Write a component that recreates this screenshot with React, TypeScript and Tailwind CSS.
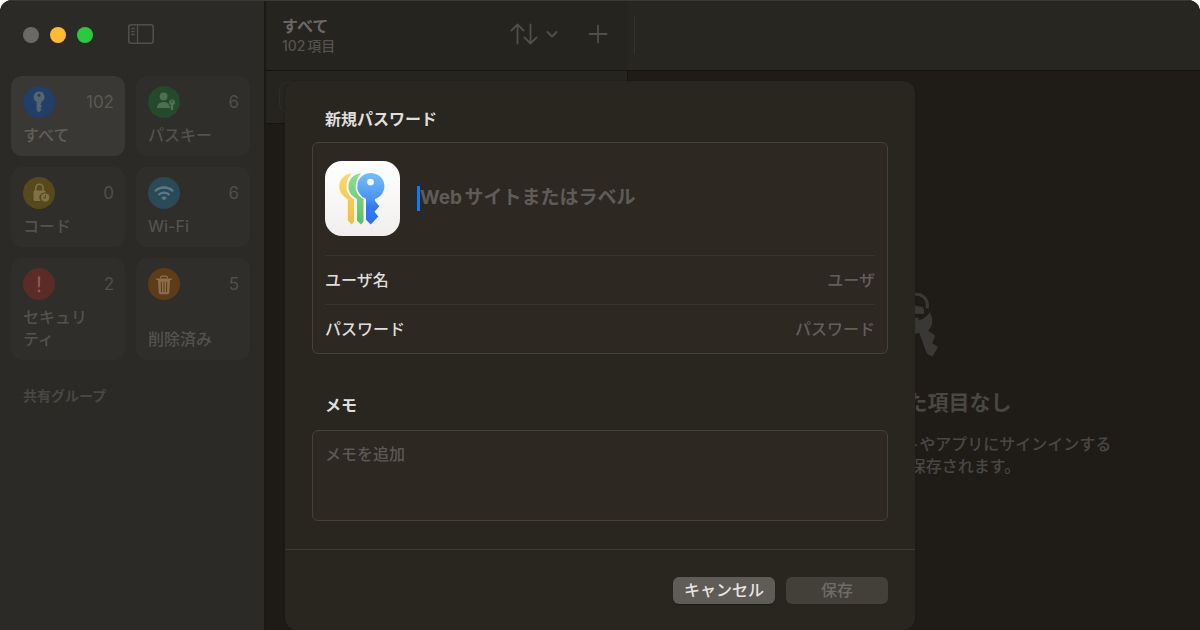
import type { ReactNode } from "react";

const FONT = "font-['Inter','Noto_Sans_CJK_JP',sans-serif]";

function KeyGlyph() {
  return (
    <svg viewBox="0 0 32 32" className="size-8" fill="#54656f" aria-hidden="true">
      <path
        fillRule="evenodd"
        d="M16 5.6a5.4 5.4 0 0 0-2.4 10.2v8.6l2.2 2.2 3-3-1.6-1.7 1.9-1.9-1.8-1.8 1.3-1.4v-1A5.4 5.4 0 0 0 16 5.6Zm0 2.2a1.5 1.5 0 1 1 0 3 1.5 1.5 0 0 1 0-3Z"
      />
    </svg>
  );
}

function PasskeyGlyph() {
  return (
    <svg viewBox="0 0 32 32" className="size-8" fill="#4f6f52" aria-hidden="true">
      <circle cx="15.6" cy="10.4" r="3.9" />
      <path d="M9 21.8c0-3.600 3-5.800 6.600-5.800 2 0 3.700.6 4.900 1.700.1 1.100.6 2 1.400 2.600v1.700H9.600c-.4 0-.6-.1-.6-.2Z" />
      <path
        fillRule="evenodd"
        d="M24 13.400a2.900 2.900 0 0 0-1.300 5.500v4.400l1.300 1.300 1.700-1.700-.9-1 1-1-.9-1 .6-1A2.900 2.900 0 0 0 24 13.400Zm0 1.400a.8.8 0 1 1 0 1.600.8.8 0 0 1 0-1.600Z"
      />
    </svg>
  );
}

function CodeGlyph() {
  return (
    <svg viewBox="0 0 32 32" className="size-8" aria-hidden="true">
      <path d="M12.700 14v-3a3.700 3.700 0 0 1 7.400 0v3" fill="none" stroke="#7e7348" strokeWidth="1.600" />
      <path
        d="M12 13.400h9c1 0 1.500.5 1.500 1.500v.7a5 5 0 0 0-4.800 8.300H12c-1 0-1.500-.5-1.500-1.500v-7.500c0-1 .5-1.500 1.500-1.500Z"
        fill="#7e7348"
      />
      <circle cx="22.200" cy="20.600" r="4.100" fill="#7e7348" />
      <path d="M22.400 18v2.800h-2.200" fill="none" stroke="#56491b" strokeWidth="1.100" />
    </svg>
  );
}

function WifiGlyph() {
  return (
    <svg viewBox="0 0 32 32" className="size-8" fill="none" stroke="#5a7986" strokeWidth="2.300" aria-hidden="true">
      <path d="M6.900 14.200a13 13 0 0 1 18.200 0" />
      <path d="M10.400 17.900a8 8 0 0 1 11.200 0" />
      <path d="M16 23.600l-2.800-2.800a4 4 0 0 1 5.600 0Z" fill="#5a7986" stroke="none" />
    </svg>
  );
}

function AlertGlyph() {
  return (
    <svg viewBox="0 0 32 32" className="size-8" fill="#8b5954" aria-hidden="true">
      <path d="M14.700 9.300c0-.7.500-1.100 1.300-1.100s1.300.4 1.300 1.100l-.4 9.300c0 .6-.4.9-.9.9s-.9-.3-.9-.9Z" />
      <circle cx="16" cy="22.900" r="1.400" />
    </svg>
  );
}

function TrashGlyph() {
  return (
    <svg viewBox="0 0 32 32" className="size-8" aria-hidden="true">
      <path d="M12.700 10.600V9.200c0-.7.400-1.100 1.100-1.100h4.400c.7 0 1.100.4 1.100 1.100v1.400" fill="none" stroke="#8d6e4c" strokeWidth="1.300" />
      <path d="M8.700 11.200h14.600" stroke="#8d6e4c" strokeWidth="1.500" strokeLinecap="round" />
      <path d="M10 12h12l-.8 12.500c-.1 1.100-.7 1.700-1.800 1.700h-6.800c-1.100 0-1.700-.6-1.800-1.700Z" fill="#8d6e4c" />
      <path d="M13.200 14l.3 9.800M16 14v9.800M18.800 14l-.3 9.800" stroke="#5e3c18" strokeWidth="1" strokeLinecap="round" />
    </svg>
  );
}

function PasswordsAppIcon() {
  return (
    <svg viewBox="0 0 75 75" className="size-[75px] shrink-0" role="img" aria-label="パスワード">
      <defs>
        <linearGradient id="tile" x1="0" y1="0" x2="0" y2="1">
          <stop offset="0" stopColor="#ffffff" />
          <stop offset="1" stopColor="#f1efed" />
        </linearGradient>
        <linearGradient id="blueKey" x1="0" y1="0" x2="0" y2="1">
          <stop offset="0" stopColor="#74c0f7" />
          <stop offset="0.500" stopColor="#4b94f6" />
          <stop offset="0.650" stopColor="#3478f6" />
          <stop offset="1" stopColor="#2f6ff5" />
        </linearGradient>
        <linearGradient id="greenKey" x1="0" y1="0" x2="0" y2="1">
          <stop offset="0" stopColor="#8be08d" />
          <stop offset="1" stopColor="#5bc163" />
        </linearGradient>
        <linearGradient id="yellowKey" x1="0" y1="0" x2="0" y2="1">
          <stop offset="0" stopColor="#f9da6c" />
          <stop offset="1" stopColor="#f3bd3d" />
        </linearGradient>
      </defs>
      <rect width="75" height="75" rx="17" fill="url(#tile)" />
      <path
        d="M26.800 12.200C19.700 12.700 14.300 18.400 14.300 25.500c0 5.300 3.300 9.800 8.500 12.400v21.700l3.900 3.800 2.300-2.700V38.300c-4.800-2.800-7.700-7.400-7.700-12.800 0-5 2-9.600 5.500-13.300Z"
        fill="url(#yellowKey)"
      />
      <path
        d="M36 12.200C28.900 12.700 23.500 18.400 23.500 25.500c0 5.300 3.300 9.800 8.500 12.400v21.700l3.900 3.800 2.600-2.700V38.300c-4.800-2.800-7.900-7.400-7.900-12.800 0-5 1.900-9.600 5.400-13.300Z"
        fill="url(#greenKey)"
      />
      <path
        fillRule="evenodd"
        d="M45.700 12A13.300 13.300 0 0 0 41 37.800v20.900l4.700 4.800 7.600-7.900-3.800-4.800 4.800-5.600-4.300-5.200v-2A13.300 13.300 0 0 0 45.700 12Zm-.2 5.700a3.400 3.400 0 1 1 0 6.800 3.400 3.400 0 0 1 0-6.800Z"
        fill="url(#blueKey)"
      />
    </svg>
  );
}

function KeyringDrawing() {
  return (
    <svg viewBox="3 0 48 66" className="h-[66px] w-12" fill="#393834" aria-hidden="true">
      <path d="M17 44 10 64 4 66 3 56 6 52 3 45 10 38Z" />
      <path d="M29 41.500 37 63l5.500 2.500L48 56l-5.800-3.800 3-7.500-7-5A14.500 14.500 0 0 0 28 15.200a14.500 14.500 0 1 0 1 26.300Z" />
      <circle cx="26.500" cy="13" r="10.800" fill="none" stroke="#1f1c17" strokeWidth="6" />
      <path d="M22 18q6-4 12 0v5H22Z" />
      <path d="M39.500 18.500q-2.500 6.500-11 9.500" fill="none" stroke="#1f1c17" strokeWidth="3" />
      <path d="M15.900 11A10.800 10.800 0 0 1 37 17.500" fill="none" stroke="#393834" strokeWidth="3" />
    </svg>
  );
}

type Category = {
  label: ReactNode;
  count: number;
  disc: string;
  glyph: ReactNode;
  selected?: boolean;
};

const categories: Category[] = [
  { label: "すべて", count: 102, disc: "bg-[#233e68]", glyph: <KeyGlyph />, selected: true },
  { label: "パスキー", count: 6, disc: "bg-[#24492b]", glyph: <PasskeyGlyph /> },
  { label: "コード", count: 0, disc: "bg-[#56491b]", glyph: <CodeGlyph /> },
  { label: "Wi-Fi", count: 6, disc: "bg-[#2b4a57]", glyph: <WifiGlyph /> },
  { label: <>セキュリ<br />ティ</>, count: 2, disc: "bg-[#5c2b28]", glyph: <AlertGlyph /> },
  { label: "削除済み", count: 5, disc: "bg-[#5e3c18]", glyph: <TrashGlyph /> },
];

function CategoryCard({ label, count, disc, glyph, selected }: Category) {
  return (
    <button
      type="button"
      className={`flex flex-col justify-between gap-1.5 rounded-[11px] py-2.5 pr-[11px] pl-3 text-left ${
        selected ? "bg-[#3a3834]" : "bg-[#2f2e2a]"
      }`}
    >
      <span className="flex w-full items-center justify-between">
        <span className={`size-8 rounded-full ${disc}`}>{glyph}</span>
        <span className={`text-[17px] leading-6 ${selected ? "text-[#5a5955]" : "text-[#504f4b]"}`}>{count}</span>
      </span>
      <span className={`text-base leading-[22px] font-medium ${selected ? "text-[#5f5e5a]" : "text-[#53524e]"}`}>
        {label}
      </span>
    </button>
  );
}

function Sidebar() {
  return (
    <aside className="flex w-[266px] shrink-0 flex-col border-r-2 border-[#1a1915] bg-[#2b2a26] px-[11px]">
      <div className="flex h-[76px] items-start pt-[23px] pl-3">
        <div className="flex h-6 items-center gap-[11px]">
          <span className="size-4 rounded-full bg-[#6b6965]" />
          <span className="size-4 rounded-full bg-[#febb2e]" />
          <span className="size-4 rounded-full bg-[#29c940]" />
        </div>
        <button type="button" aria-label="サイドバー" className="ml-[34px]">
          <svg viewBox="0 0 28 24" className="h-6 w-7" fill="none" stroke="#504f4b" strokeWidth="1.600">
            <rect x="1.800" y="1.800" width="24.400" height="18.400" rx="2.500" />
            <path d="M10.500 2v18M4.200 5.500h3.600M4.200 8.500h3.600M4.200 11.500h3.600" strokeWidth="1.300" />
          </svg>
        </button>
      </div>
      <nav className="grid w-[239px] grid-cols-2 gap-[11px]">
        {categories.map((category, index) => (
          <CategoryCard key={index} {...category} />
        ))}
      </nav>
      <h2 className="mt-6 pl-3 text-sm leading-6 font-bold text-[#484743]">共有グループ</h2>
    </aside>
  );
}

function ItemList() {
  return (
    <section className="flex w-[362px] shrink-0 flex-col">
      <header className="flex h-[71px] items-center justify-between border-b border-[#161410] bg-[#26241f] pr-5 pl-4">
        <div className="pt-px">
          <h1 className="text-base leading-5 font-bold text-[#6a6864]">すべて</h1>
          <p className="text-sm leading-5 font-medium text-[#54524e] [text-autospace:normal]">102項目</p>
        </div>
        <div className="flex items-center gap-[30px] pb-0.5 text-[#504e4a]">
          <button type="button" aria-label="並べ替え" className="flex items-center gap-2">
            <svg viewBox="0 0 28 24" className="h-6 w-7" fill="none" stroke="currentColor" strokeWidth="1.800" strokeLinecap="round" strokeLinejoin="round">
              <path d="M7.500 21.500V2.500M1.500 8.500l6-6 6 6M20.500 2.500v19M14.500 15.500l6 6 6-6" />
            </svg>
            <svg viewBox="0 0 12 12" className="size-3" fill="none" stroke="currentColor" strokeWidth="2" strokeLinecap="round" strokeLinejoin="round">
              <path d="M1.500 4 6 8.500 10.500 4" />
            </svg>
          </button>
          <button type="button" aria-label="追加">
            <svg viewBox="0 0 20 20" className="size-5" stroke="currentColor" strokeWidth="1.800" strokeLinecap="round">
              <path d="M10 1.500v17M1.500 10h17" />
            </svg>
          </button>
        </div>
      </header>
      <div className="flex h-[53px] items-start border-r border-b border-[#161410] bg-[#26241f] px-[13px] pt-[11px]">
        <input
          type="search"
          aria-label="検索"
          className="h-[30px] w-full rounded-lg border border-[#2d2c28] bg-[#272520] outline-none"
        />
      </div>
      <div className="grow bg-[#1e1b16]" />
    </section>
  );
}

function Detail() {
  return (
    <section className="flex min-w-0 grow flex-col">
      <header className="flex h-[71px] items-center border-b border-[#161410] bg-[#272621] px-1.5">
        <span className="h-[38px] w-px bg-[#34332f]" />
      </header>
      <div className="flex grow flex-col items-center bg-[#1f1c17] pt-[220px] pl-1.5 text-center text-[#494743]">
        <KeyringDrawing />
        <h2 className="mt-8 text-[21px] leading-7 font-bold whitespace-nowrap">選択された項目なし</h2>
        <p className="mt-4 text-base leading-[22px] font-medium whitespace-nowrap [text-autospace:normal]">
          パスワードは、Webサイトやアプリにサインインする
          <br />
          ときに自動で保存されます。
        </p>
      </div>
    </section>
  );
}

function FieldRow({ id, label, placeholder, type }: { id: string; label: string; placeholder: string; type: string }) {
  return (
    <div className="flex h-[49px] items-center justify-between border-t border-[#38352f] text-base leading-6">
      <label htmlFor={id} className="shrink-0 font-medium text-[#dfdedc]">
        {label}
      </label>
      <input
        id={id}
        type={type}
        placeholder={placeholder}
        className="min-w-0 grow bg-transparent text-right font-medium text-[#dfdedc] outline-none placeholder:text-[#625f5a]"
      />
    </div>
  );
}

function NewPasswordDialog() {
  return (
    <form
      role="dialog"
      aria-label="新規パスワード"
      className="absolute top-[81px] left-1/2 w-[630px] -translate-x-1/2 rounded-xl bg-[#29251f] shadow-[0_0_2px_rgba(0,0,0,0.25)]"
    >
      <div className="px-[27px] pt-[26px] pb-7">
        <h2 className="pl-[13px] text-base leading-6 font-bold text-[#dfdedc]">新規パスワード</h2>
        <div className="mt-[11px] rounded-md border border-[#44413b] bg-[#2d2822] px-3">
          <div className="flex h-[112px] items-center pb-0.5">
            <PasswordsAppIcon />
            <span className="ml-[17px] h-[25px] w-[3px] shrink-0 bg-[#0a7aff]" />
            <input
              type="text"
              aria-label="Webサイトまたはラベル"
              placeholder="Webサイトまたはラベル"
              className="min-w-0 grow bg-transparent text-[19px] leading-7 font-bold text-[#dfdedc] outline-none [text-autospace:normal] placeholder:text-[#5f5c57]"
            />
          </div>
          <FieldRow id="user" label="ユーザ名" placeholder="ユーザ" type="text" />
          <FieldRow id="password" label="パスワード" placeholder="パスワード" type="password" />
        </div>
        <label htmlFor="memo" className="mt-[39px] block pl-[13px] text-base leading-6 font-bold text-[#dfdedc]">
          メモ
        </label>
        <textarea
          id="memo"
          placeholder="メモを追加"
          className="mt-[13px] block h-[91px] w-full resize-none rounded-md border border-[#44413b] bg-[#2d2822] px-3 py-[11px] text-base leading-6 font-medium text-[#dfdedc] outline-none placeholder:text-[#5b5853]"
        />
      </div>
      <div className="flex justify-end gap-[11px] border-t border-[#3d3a34] px-[27px] pt-[27px] pb-[26px] text-base leading-6">
        <button
          type="button"
          className="h-[27px] w-[102px] rounded-md bg-[#5f5c55] pb-0.5 font-medium text-[#e6e5e3] shadow-[0_1px_1px_rgba(0,0,0,0.3)]"
        >
          キャンセル
        </button>
        <button
          type="submit"
          disabled
          className="h-[27px] w-[102px] rounded-md bg-[#433f39] pb-0.5 font-medium text-[#6f6c67]"
        >
          保存
        </button>
      </div>
    </form>
  );
}

export default function App() {
  return (
    <div lang="ja" className="bg-white">
      <main
        className={`relative flex min-h-screen overflow-hidden rounded-t-xl bg-[#1f1c17] ${FONT}`}
      >
        <Sidebar />
        <ItemList />
        <Detail />
        <NewPasswordDialog />
        <div className="pointer-events-none absolute inset-x-0 top-0 h-px bg-[#3a3935]" />
      </main>
    </div>
  );
}
